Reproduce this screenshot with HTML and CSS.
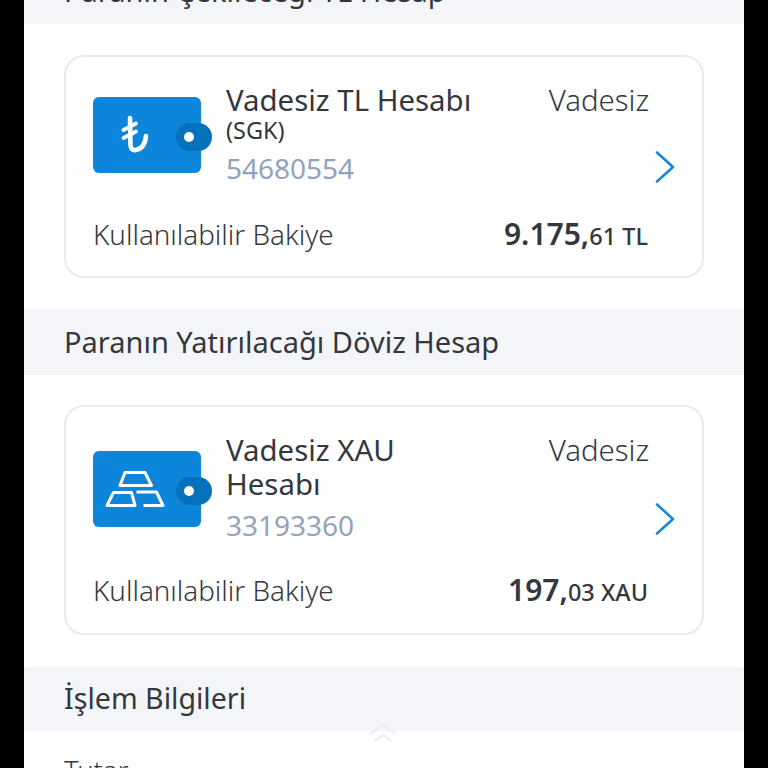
FILE: index.html
```html
<!DOCTYPE html>
<html lang="tr">
<head>
    <meta charset="UTF-8">
    <meta name="viewport" content="width=device-width, initial-scale=1.0">
    <title>Döviz Al</title>
    <link rel="stylesheet" href="styles.css">
</head>
<body>

<div class="screen">
    <h2 class="section-title section-title-cut">Paranın Çekileceği TL Hesap</h2>

    <div class="card-wrap">
        <div class="card">
            <div class="card-top">
                <div class="wallet">
                    <svg class="wallet-glyph" width="30" height="40" viewBox="0 0 30 40">
                        <path d="M10 3 L10.5 30 Q11 36 16 35 Q25 33 26 21" fill="none" stroke="#fff" stroke-width="4.6" stroke-linecap="round"/>
                        <path d="M3.5 15 L16 8.5 M3.5 23 L16 16.5" fill="none" stroke="#fff" stroke-width="3.8" stroke-linecap="round"/>
                    </svg>
                    <span class="wallet-clasp"></span>
                </div>
                <div class="account">
                    <div class="account-name">Vadesiz TL Hesabı</div>
                    <div class="account-note">(SGK)</div>
                    <div class="account-no">54680554</div>
                </div>
                <div class="side">
                    <div class="account-type">Vadesiz</div>
                    <svg class="chevron" width="20" height="32" viewBox="0 0 20 32">
                        <path d="M2 1.5 L18 16 L2 30.5" fill="none" stroke="#1b87d6" stroke-width="2.6" stroke-linecap="round" stroke-linejoin="round"/>
                    </svg>
                </div>
            </div>
            <div class="balance">
                <span class="balance-label">Kullanılabilir Bakiye</span>
                <span class="balance-value">9.175,<small>61 TL</small></span>
            </div>
        </div>
    </div>

    <h2 class="section-title">Paranın Yatırılacağı Döviz Hesap</h2>

    <div class="card-wrap card-wrap-tall">
        <div class="card card-tall">
            <div class="card-top">
                <div class="wallet">
                    <svg class="wallet-glyph" width="60" height="40" viewBox="0 0 60 40">
                        <path d="M20 3.5 H40 L46.5 16.5 H15 Z" fill="none" stroke="#fff" stroke-width="3" stroke-linejoin="round"/>
                        <path d="M8.5 23.5 H26.5 L30 36.5 H2 Z" fill="none" stroke="#fff" stroke-width="3" stroke-linejoin="round"/>
                        <path d="M31.5 23 H51.5 L58 36.5 H38.5" fill="none" stroke="#fff" stroke-width="3" stroke-linejoin="round"/>
                    </svg>
                    <span class="wallet-clasp"></span>
                </div>
                <div class="account">
                    <div class="account-name">Vadesiz XAU<br>Hesabı</div>
                    <div class="account-no">33193360</div>
                </div>
                <div class="side">
                    <div class="account-type">Vadesiz</div>
                    <svg class="chevron" width="20" height="32" viewBox="0 0 20 32">
                        <path d="M2 1.5 L18 16 L2 30.5" fill="none" stroke="#1b87d6" stroke-width="2.6" stroke-linecap="round" stroke-linejoin="round"/>
                    </svg>
                </div>
            </div>
            <div class="balance">
                <span class="balance-label">Kullanılabilir Bakiye</span>
                <span class="balance-value">197,<small>03 XAU</small></span>
            </div>
        </div>
    </div>

    <h2 class="section-title section-title-last">İşlem Bilgileri</h2>

    <div class="field-label">Tutar</div>
</div>

<svg class="scroll-up" width="30" height="20" viewBox="0 0 30 20">
    <path d="M2 11 L15 2 L28 11 M7 18 L15 12 L23 18" fill="none" stroke="#eceef2" stroke-width="2.4"/>
</svg>

</body>
</html>
```

FILE: styles.css
```css
html, body {
    height: 100%;
}

body {
    margin: 0;
    background-color: #000;
    overflow: hidden;
    font-family: 'Noto Sans', sans-serif;
    color: #34383d;
}

.screen {
    width: 720px;
    height: 810px;
    margin: -42px auto 0;
    background-color: #fff;
    overflow: hidden;
}

.section-title {
    height: 66px;
    margin: 0;
    padding-left: 40px;
    background-color: #f4f5f9;
    font-size: 29px;
    font-weight: 400;
    line-height: 66px;
}

.section-title-last {
    height: 64px;
    font-size: 28.6px;
    line-height: 62px;
}

.card-wrap {
    padding: 31px 40px 30px;
}

.card-wrap-tall {
    padding: 30px 40px 31px;
}

.card-wrap + .section-title {
    margin-top: 1px;
}

.card {
    height: 223px;
    box-sizing: border-box;
    padding: 26px 27px 0 27px;
    border: 2px solid #e7eaee;
    border-radius: 20px;
}

.card-tall {
    height: 230px;
}

.card-top {
    display: flex;
    align-items: flex-start;
}

.wallet {
    position: relative;
    flex: none;
    display: flex;
    align-items: center;
    justify-content: center;
    width: 108px;
    height: 76px;
    margin-top: 14px;
    margin-right: 25px;
    background-color: #0c85da;
    border-radius: 6px;
}

.card-tall .wallet {
    margin-top: 18px;
}

.wallet-glyph {
    margin-right: 24px;
}

/* round clasp that sticks out of the wallet */
.wallet-clasp {
    position: absolute;
    right: -11px;
    top: 26px;
    width: 36px;
    height: 28px;
    border-radius: 14px;
    background-color: #0670bb;
}

.wallet-clasp::after {
    content: "";
    position: absolute;
    left: 8px;
    top: 9px;
    width: 10px;
    height: 10px;
    border-radius: 50%;
    background-color: #fff;
}

.account {
    flex: 1;
}

.account-name {
    font-size: 29.4px;
    font-weight: 400;
    line-height: 34px;
}

.account-note {
    font-size: 23.5px;
    line-height: 26px;
}

.account-no {
    margin-top: 6px;
    font-size: 28px;
    line-height: 38px;
    color: #93a3bb;
}

.card-tall .account-no {
    margin-top: 5px;
}

.side {
    display: flex;
    flex-direction: column;
    align-items: flex-end;
}

.account-type {
    margin-right: 26px;
    font-size: 29.4px;
    font-weight: 300;
    line-height: 34px;
}

.chevron {
    margin-top: 34px;
}

.card-tall .chevron {
    margin-top: 36px;
}

.balance {
    display: flex;
    justify-content: space-between;
    align-items: baseline;
    margin-top: 26px;
    padding-right: 27px;
}

.card-tall .balance {
    margin-top: 25px;
}

.balance-label {
    font-size: 27.8px;
    font-weight: 300;
}

.balance-value {
    font-size: 30px;
    font-weight: 600;
}

.balance-value small {
    font-size: 23.5px;
    font-weight: 500;
}

.field-label {
    margin: 21px 0 0 40px;
    font-size: 27.5px;
    font-weight: 300;
}

.scroll-up {
    position: absolute;
    left: 368px;
    top: 723px;
}
```
